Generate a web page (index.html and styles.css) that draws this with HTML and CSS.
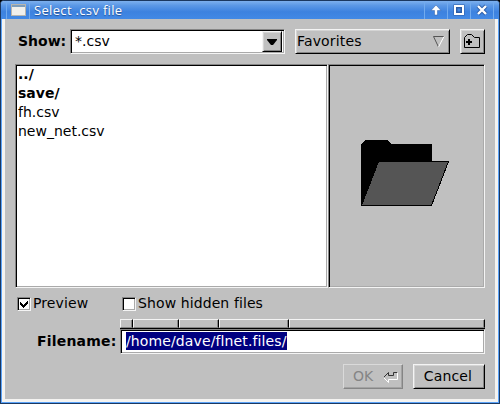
FILE: index.html
```
<!DOCTYPE html>
<html lang="en">
<head>
<meta charset="utf-8">
<title>Select .csv file</title>
<link rel="stylesheet" href="styles.css">
</head>
<body>
<div class="window">
  <header class="titlebar">
    <span class="app-icon"><svg width="15" height="12" shape-rendering="crispEdges"><rect width="15" height="12" fill="#b9b6ae"/><rect x="1" y="1" width="13" height="2" fill="#7d9dbb"/><rect x="1" y="3" width="13" height="8" fill="#f1f0ec"/></svg></span>
    <h1 class="title">Select .csv file</h1>
    <span class="control"><svg width="12" height="12"><path d="M6 1 11 6.5H7.5V11h-3V6.5H1z" fill="#fff" stroke="#2c5ca5" stroke-width=".5"/></svg></span>
    <span class="control"><svg width="12" height="12"><rect x="2.5" y="2.5" width="7" height="7" fill="none" stroke="#2c5ca5" stroke-width="4"/><rect x="2" y="2" width="8" height="8" fill="none" stroke="#fff" stroke-width="2"/></svg></span>
    <span class="control"><svg width="12" height="12"><path d="M2 2l8 8M10 2l-8 8" stroke="#2c5ca5" stroke-width="4"/><path d="M2 2l8 8M10 2l-8 8" stroke="#fff" stroke-width="2.4"/></svg></span>
    <span class="control end"></span>
  </header>
  <main class="body">
    <div class="row top">
      <label class="label show">Show:</label>
      <div class="sunken combo"><span>*.csv</span><span class="raised drop"><svg width="10" height="6"><path d="M0 0h10v1L6 6H4L0 1z" fill="#000"/></svg></span></div>
      <div class="raised favorites"><span>Favorites</span><svg width="12" height="12"><path d="M11 .5H.5L5.5 11" fill="none" stroke="#555"/><path d="M11 .5 5.5 11" fill="none" stroke="#fff"/></svg></div>
      <div class="raised new-folder"><svg width="17" height="15" fill="none" stroke="#000"><path d="M.5 13.5v-10l3-3h4l3 3h5v10z"/><path d="M5 5v6M2 8h6" stroke-width="2"/></svg></div>
    </div>
    <div class="row panes">
      <ul class="sunken files"><li class="dir">../</li><li class="dir">save/</li><li>fh.csv</li><li>new_net.csv</li></ul>
      <div class="sunken preview"><svg width="90" height="68" shape-rendering="crispEdges"><path d="M1 4 5 0h22l4 4h41v18H18V66H1z" fill="#000"/><path d="M18.5 21.5h70l-17 44h-70z" fill="#555" stroke="#000"/></svg></div>
    </div>
    <div class="row checks">
      <label class="check"><span class="sunken box"><svg width="10" height="10" shape-rendering="crispEdges"><path d="M1 3 4 6 9 1v3L4 9 1 6z" fill="#000"/></svg></span>Preview</label>
      <label class="check hidden-files"><span class="sunken box"></span>Show hidden files</label>
    </div>
    <div class="row name">
      <label class="label filename">Filename:</label>
      <div class="field">
        <div class="crumbs"><i class="c1"></i><i class="c2"></i><i class="c3"></i><i class="c4"></i><i class="c5"></i></div>
        <div class="sunken input"><span class="selected">/home/dave/flnet.files/</span></div>
      </div>
    </div>
    <div class="row buttons">
      <div class="raised ok"><span>OK</span><svg width="16" height="12" fill="none"><path d="M.5 6.5 5.5 1.5v3h5v-3h4" stroke="#333"/><path d="M14.5 1.5v7h-9v3l-5-5" stroke="#fff"/></svg></div>
      <div class="raised cancel">Cancel</div>
    </div>
  </main>
</div>
</body>
</html>
```

FILE: styles.css
```
* { box-sizing: border-box; }
body { margin: 0; background: #000; }
svg { display: block; flex: none; }
.window {
  width: 500px; height: 404px;
  display: flex; flex-direction: column;
  background: #f4f3f1;
  border: 1px solid #1b3860;
  border-radius: 4px 4px 0 0;
  box-shadow: inset 1px 0 #5ba3f8, inset -1px 0 #5ba3f8, inset 0 -1px #5ba3f8;
  font: 14px/19px "DejaVu Sans", sans-serif;
  color: #000;
  overflow: hidden;
}
.titlebar {
  height: 18px; flex: none;
  display: flex; align-items: center;
  padding-left: 5px;
  background: linear-gradient(#7db0ee 0, #5b98e6 25%, #3d82df 60%, #4289e5 100%);
}
.app-icon { width: 24px; height: 18px; display: flex; align-items: center; padding: 0 0 0 4px; border: solid #72abee; border-width: 0 1px; }
.title { flex: 1; margin: 0; padding-left: 4px; font: 500 13px/18px "Open Sans", sans-serif; letter-spacing: .33px; color: #fff; text-shadow: 0 1px 1px #245091; }
.control { width: 23px; height: 18px; display: flex; align-items: center; justify-content: center; border-left: 1px solid #72abee; }
.end { width: 6px; }
.body { flex: none; width: 490px; height: 380px; margin: 0 4px; padding: 10px; background: #c0c0c0; }
.row { display: flex; }
.label { font-weight: bold; white-space: nowrap; }
.sunken {
  border: 1px solid; border-color: #858585 #f4f4f4 #f4f4f4 #858585;
  box-shadow: inset 1px 1px #000, inset -1px -1px #aaa;
  background: #fff;
}
.raised {
  display: flex; align-items: center;
  border: 1px solid; border-color: #f4f4f4 #000 #000 #f4f4f4;
  box-shadow: inset 1px 1px #d4d4d4, inset -1px -1px #858585;
  background: #c0c0c0;
}
.top { height: 35px; }
.show { width: 55px; padding: 3px 0 0 3px; }
.combo { width: 215px; height: 25px; display: flex; justify-content: space-between; padding: 1px 2px 1px 4px; line-height: 20px; }
.drop { width: 20px; height: 21px; justify-content: center; }
.favorites { width: 155px; height: 25px; margin-left: 10px; padding: 0 4px 0 1px; justify-content: space-between; letter-spacing: .15px; }
.new-folder { width: 25px; height: 25px; margin-left: 10px; padding-left: 3px; }
.panes { height: 224px; }
.files { width: 313px; margin: 0; padding: 0 2px; list-style: none; }
.files li { height: 19px; }
.dir { font-weight: bold; }
.preview { width: 157px; background: #c0c0c0; padding: 75px 0 0 31px; }
.checks { height: 31px; padding: 6px 0 0 2px; }
.check { display: flex; width: 105px; height: 19px; letter-spacing: .1px; white-space: nowrap; }
.hidden-files { width: 150px; }
.box { width: 14px; height: 14px; margin: 3px 2px 0 0; padding: 1px; }
.name { height: 35px; }
.filename { width: 105px; padding: 13px 0 0 22px; letter-spacing: .2px; }
.field { width: 365px; }
.crumbs { display: flex; height: 10px; border-bottom: 1px solid #000; }
.crumbs i { height: 9px; border: 1px solid; border-color: #f4f4f4 #000 #858585 #f4f4f4; box-shadow: inset -1px 0 #858585; }
.c1 { width: 13px; }
.c2 { width: 46px; }
.c3 { width: 40px; }
.c4 { width: 70px; }
.c5 { width: 196px; }
.input { height: 25px; padding: 2px 5px; }
.selected { display: block; width: 161px; height: 18px; background: #000080; color: #fff; line-height: 19px; letter-spacing: .12px; white-space: nowrap; }
.buttons { justify-content: flex-end; gap: 10px; padding-top: 10px; }
.ok { width: 60px; height: 25px; padding: 0 3px 0 9px; justify-content: space-between; color: #858585; border-color: #dadada #858585 #858585 #dadada; box-shadow: inset -1px -1px #a3a3a3; }
.cancel { width: 72px; height: 25px; padding-right: 2px; justify-content: center; letter-spacing: .15px; }
```
